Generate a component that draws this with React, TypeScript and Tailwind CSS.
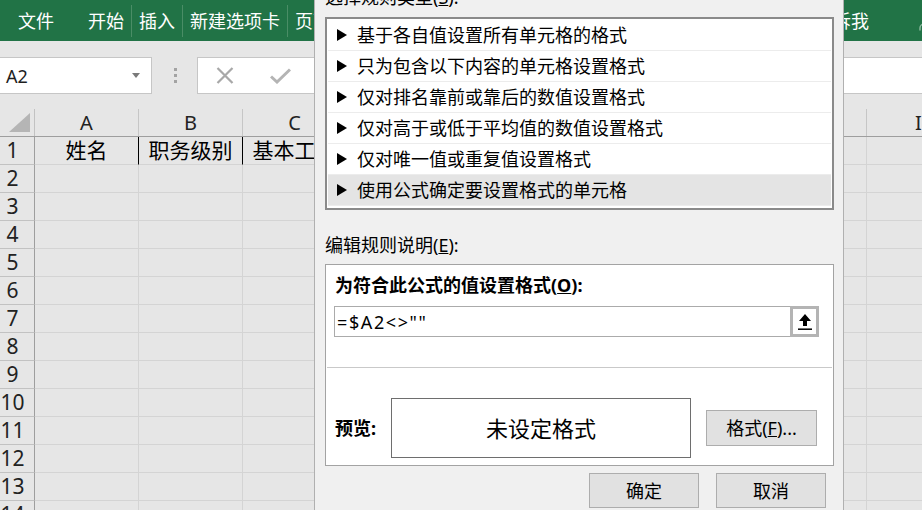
import { User } from 'lucide-react'

const COLS = ['A', 'B', 'C', 'D', 'E', 'F', 'G', 'H', 'I']
const ROWS = Array.from({ length: 14 }, (_, i) => i + 1)
const ROW1: Record<string, string> = { A: '姓名', B: '职务级别', C: '基本工资' }

const RULES = [
  '基于各自值设置所有单元格的格式',
  '只为包含以下内容的单元格设置格式',
  '仅对排名靠前或靠后的数值设置格式',
  '仅对高于或低于平均值的数值设置格式',
  '仅对唯一值或重复值设置格式',
  '使用公式确定要设置格式的单元格',
]

function RibbonSep() {
  return <div className="mx-[7px] h-[32px] w-px bg-[#4a8d66]" />
}

function Ribbon() {
  return (
    <div className="flex h-[41px] items-center bg-[#217346] pl-[18px] text-[18px] leading-none text-white">
      <span>文件</span>
      <span className="ml-[34px]">开始</span>
      <RibbonSep />
      <span>插入</span>
      <RibbonSep />
      <span>新建选项卡</span>
      <RibbonSep />
      <span>页面布局</span>
      <span className="ml-auto">告诉我</span>
      <User className="mr-[-17px] ml-[46px] h-[24px] w-[24px] text-[#8fbba1]" strokeWidth={1.4} />
    </div>
  )
}

function FormulaBar() {
  return (
    <div className="flex h-[37px]">
      <div className="flex w-[152px] items-center justify-between border border-l-0 border-[#c6c6c6] bg-white pr-[11px] pl-[6px]">
        <span className="text-[18px] leading-none text-[#1e1e1e]">A2</span>
        <svg width="8" height="5" viewBox="0 0 8 5">
          <path d="M0 0h8L4 5z" fill="#7a7a7a" />
        </svg>
      </div>
      <div className="flex w-[45px] flex-col items-center justify-center gap-[3px] pl-[1px]">
        <div className="h-[3px] w-[3px] bg-[#a3a3a3]" />
        <div className="h-[3px] w-[3px] bg-[#a3a3a3]" />
        <div className="h-[3px] w-[3px] bg-[#a3a3a3]" />
      </div>
      <div className="flex flex-1 items-center border border-r-0 border-[#c6c6c6] bg-white pl-[18px]">
        <svg width="18" height="17" viewBox="0 0 18 17">
          <path d="M1.5 1 16.5 16M16.5 1 1.5 16" stroke="#a8a8a8" strokeWidth="2.2" fill="none" />
        </svg>
        <svg className="ml-[36px]" width="21" height="16" viewBox="0 0 21 16">
          <path d="M1 8.5 7 14 20 1.5" stroke="#b4b4b4" strokeWidth="3" fill="none" />
        </svg>
      </div>
    </div>
  )
}

function Grid() {
  return (
    <div className="flex flex-col">
      <div className="flex h-[28px] border-b border-[#9e9e9e] bg-[#e6e6e6]">
        <div className="flex w-[35px] shrink-0 items-end justify-end border-r border-[#c2c2c2] pr-[4px] pb-[4px]">
          <svg width="21" height="19" viewBox="0 0 21 19">
            <path d="M21 0V19H0z" fill="#b5b5b5" />
          </svg>
        </div>
        {COLS.map((c) => (
          <div
            key={c}
            className="flex w-[104px] shrink-0 items-center justify-center border-r border-[#c6c6c6] text-[20px] leading-none text-[#222]"
          >
            {c}
          </div>
        ))}
      </div>
      {ROWS.map((r) => (
        <div key={r} className="flex h-[28px]">
          <div className="flex w-[35px] shrink-0 items-center justify-center border-r border-b border-r-[#9e9e9e] border-b-[#c2c2c2] bg-[#e6e6e6] pr-[9px] text-[21px] leading-none text-[#222]">
            {r}
          </div>
          {COLS.map((c) => (
            <div
              key={c}
              className={`flex w-[104px] shrink-0 items-center justify-center border-b border-[#d4d4d4] text-[21px] leading-none text-black ${
                r === 1 && (c === 'A' || c === 'B' || c === 'C') ? 'border-r-[1.5px] border-r-black' : 'border-r'
              }`}
            >
              {r === 1 ? ROW1[c] ?? '' : ''}
            </div>
          ))}
        </div>
      ))}
    </div>
  )
}

function Triangle() {
  return (
    <svg width="10" height="12" viewBox="0 0 10 12" className="shrink-0">
      <path d="M0 0 10 6 0 12z" fill="#000" />
    </svg>
  )
}

function UploadIcon() {
  return (
    <svg width="16" height="18" viewBox="0 0 16 18">
      <path d="M8 1 14 8H10V13H6V8H2z" fill="#000" />
      <path d="M1 16.2H15" stroke="#000" strokeWidth="1.5" />
    </svg>
  )
}

function RuleDialog() {
  return (
    <div className="absolute top-[-30px] left-[314px] h-[560px] w-[530px] border-x border-[#b0b0b0] bg-[#f0f0f0] pt-[15px] pl-[10px] text-[18px] text-black">
      <p className="h-[24px] leading-[24px]">
        选择规则类型(<span className="underline">S</span>):
      </p>

      <div className="mt-[8px] h-[193px] w-[509px] border-2 border-[#8a8a8a] bg-white px-[1px] pt-[1px]">
        {RULES.map((rule, i) => (
          <div
            key={rule}
            className={`flex h-[31px] items-center gap-[10px] border-b border-[#ececec] pl-[9px] leading-none ${
              i === RULES.length - 1 ? 'bg-[#e4e4e4]' : ''
            }`}
          >
            <Triangle />
            <span>{rule}</span>
          </div>
        ))}
      </div>

      <p className="mt-[23px] h-[24px] leading-[24px]">
        编辑规则说明(<span className="underline">E</span>):
      </p>

      <div className="mt-[7px] h-[202px] w-[509px] border border-[#a3a3a3] bg-white pt-[8px] pl-[8px]">
        <p className="h-[24px] pl-[1px] leading-[24px] font-bold">
          为符合此公式的值设置格式(<span className="underline">O</span>):
        </p>
        <div className="mt-[9px] flex h-[31px] w-[485px] items-center border border-[#ababab]">
          <span className="flex-1 pl-[2px] leading-none tracking-[1.6px]">=$A2&lt;&gt;""</span>
          <div className="-my-px -mr-px flex h-[31px] w-[29px] items-center justify-center border-[3px] border-[#b4b4b4] bg-white">
            <UploadIcon />
          </div>
        </div>
        <div className="mt-[30px] ml-[-7px] h-px w-[505px] bg-[#c9c9c9]" />
        <div className="mt-[30px] flex items-center">
          <span className="w-[57px] pl-[1px] leading-none font-bold">预览:</span>
          <div className="flex h-[60px] w-[300px] items-center justify-center border border-[#6e6e6e] text-[22px] leading-none">
            未设定格式
          </div>
          <button className="ml-[15px] h-[36px] w-[111px] border border-[#adadad] bg-[#e1e1e1] leading-none">
            格式(<span className="underline">F</span>)...
          </button>
        </div>
      </div>

      <div className="mt-[7px] flex justify-end gap-[17px] pr-[17px]">
        <button className="h-[35px] w-[110px] border border-[#adadad] bg-[#e1e1e1] leading-none">确定</button>
        <button className="h-[35px] w-[110px] border border-[#adadad] bg-[#e1e1e1] leading-none">取消</button>
      </div>
    </div>
  )
}

export default function App() {
  return (
    <div className="relative h-[510px] w-[922px] overflow-hidden bg-[#e6e6e6] font-['Noto_Sans','Noto_Sans_CJK_SC',sans-serif]">
      <Ribbon />
      <div className="h-[16px]" />
      <FormulaBar />
      <div className="h-[15px]" />
      <Grid />
      <RuleDialog />
    </div>
  )
}
